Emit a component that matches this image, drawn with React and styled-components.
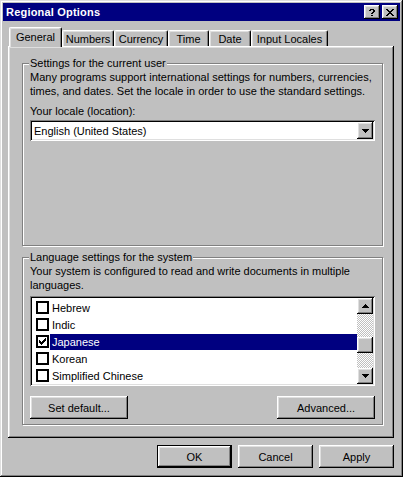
import React from "react";
import styled, { createGlobalStyle } from "styled-components";

const GlobalStyle = createGlobalStyle`
  body {
    margin: 0;
    background: #c0c0c0;
    font-family: "Liberation Sans", Arial, sans-serif;
    font-size: 11px;
    color: #000;
  }
`;

const raised = `
  box-shadow: inset -1px -1px #000, inset 1px 1px #fff,
    inset -2px -2px #808080, inset 2px 2px #dfdfdf;
`;

const sunken = `
  box-shadow: inset 1px 1px #808080, inset -1px -1px #fff,
    inset 2px 2px #000, inset -2px -2px #dfdfdf;
`;

const Window = styled.div`
  width: 403px;
  height: 477px;
  box-sizing: border-box;
  padding: 3px;
  background: #c0c0c0;
  box-shadow: inset -1px -1px #000, inset 1px 1px #dfdfdf,
    inset -2px -2px #808080, inset 2px 2px #fff;
  display: flex;
  flex-direction: column;
`;

const TitleBar = styled.div`
  height: 18px;
  background: #000080;
  color: #fff;
  display: flex;
  align-items: center;
  justify-content: space-between;
  padding: 0 2px 0 3px;
`;

const TitleText = styled.span`
  font-weight: bold;
  font-size: 11px;
  letter-spacing: 0.2px;
`;

const TitleButtons = styled.div`
  display: flex;
  gap: 2px;
`;

const TitleButton = styled.div`
  width: 16px;
  height: 14px;
  background: #c0c0c0;
  display: flex;
  align-items: center;
  justify-content: center;
  ${raised}
`;

const Body = styled.div`
  flex: 1;
  display: flex;
  flex-direction: column;
  padding: 6px 6px 6px 5px;
`;

const TabRow = styled.div`
  display: flex;
  align-items: flex-end;
  height: 19px;
  padding-left: 1px;
  position: relative;
  z-index: 1;
`;

const Tab = styled.div`
  width: ${(p) => p.$w}px;
  height: ${(p) => (p.$active ? 20 : 16)}px;
  margin-bottom: ${(p) => (p.$active ? -1 : 0)}px;
  box-sizing: border-box;
  background: #c0c0c0;
  border-top: 1px solid #fff;
  border-left: 1px solid #fff;
  border-right: 1px solid #000;
  border-radius: 2px 2px 0 0;
  box-shadow: inset -1px 0 #808080, inset 1px 1px #dfdfdf;
  display: flex;
  align-items: ${(p) => (p.$active ? "flex-start" : "center")};
  padding-top: ${(p) => (p.$active ? 3 : 0)}px;
  justify-content: center;
`;

const Panel = styled.div`
  flex: 1;
  display: flex;
  flex-direction: column;
  gap: 5px;
  padding: 11px 11px 13px 14px;
  ${raised}
`;

const Group = styled.fieldset`
  margin: 0;
  padding: 0 7px ${(p) => p.$pb || 0}px 7px;
  border: 1px solid #808080;
  box-shadow: inset 1px 1px #fff, 1px 1px #fff;
  flex: ${(p) => (p.$grow ? 1 : "none")};
  min-width: 0;
  display: flex;
  flex-direction: column;
`;

const Legend = styled.legend`
  padding: 0 1px;
  margin-left: -1px;
  line-height: 13px;
  background: #c0c0c0;
`;

const Para = styled.div`
  line-height: 14px;
  margin-top: ${(p) => p.$mt || 0}px;
`;

const Combo = styled.div`
  margin-top: 2px;
  height: 21px;
  box-sizing: border-box;
  background: #fff;
  padding: 2px;
  display: flex;
  align-items: center;
  ${sunken}
`;

const ComboText = styled.span`
  flex: 1;
  padding-left: 2px;
`;

const ArrowButton = styled.div`
  width: 16px;
  height: ${(p) => p.$h || 16}px;
  flex: none;
  background: #c0c0c0;
  display: flex;
  align-items: center;
  justify-content: center;
  ${raised}
`;

const ListBox = styled.div`
  margin-top: 4px;
  height: 90px;
  box-sizing: border-box;
  padding: 2px;
  background: #fff;
  display: flex;
  ${sunken}
`;

const Items = styled.div`
  flex: 1;
  display: flex;
  flex-direction: column;
  padding-top: 1px;
`;

const Item = styled.div`
  height: 17px;
  display: flex;
  align-items: center;
  padding-left: 4px;
`;

const Check = styled.div`
  width: 13px;
  height: 13px;
  box-sizing: border-box;
  border: 2px solid #000;
  background: #fff;
  display: flex;
  align-items: center;
  justify-content: center;
  flex: none;
`;

const ItemLabel = styled.span`
  flex: 1;
  height: 16px;
  line-height: 16px;
  margin-left: 1px;
  padding-left: 2px;
  background: ${(p) => (p.$sel ? "#000080" : "transparent")};
  color: ${(p) => (p.$sel ? "#fff" : "#000")};
`;

const ScrollBar = styled.div`
  width: 16px;
  flex: none;
  display: flex;
  flex-direction: column;
`;

const Track = styled.div`
  flex: 1;
  background-image: conic-gradient(#fff 25%, #c0c0c0 0 50%, #fff 0 75%, #c0c0c0 0);
  background-size: 2px 2px;
  display: flex;
  flex-direction: column;
  padding-top: 23px;
`;

const Thumb = styled.div`
  height: 16px;
  background: #c0c0c0;
  ${raised}
`;

const ButtonRow = styled.div`
  display: flex;
  justify-content: ${(p) => p.$justify || "space-between"};
  gap: 6px;
  margin-top: ${(p) => p.$mt || 0}px;
`;

const Button = styled.div`
  width: ${(p) => p.$w || 75}px;
  height: 23px;
  box-sizing: border-box;
  background: #c0c0c0;
  display: flex;
  align-items: center;
  justify-content: center;
  ${(p) =>
    p.$default
      ? `border: 1px solid #000;
         box-shadow: inset -1px -1px #000, inset 1px 1px #fff,
           inset -2px -2px #808080, inset 2px 2px #dfdfdf;`
      : raised}
`;

const Pixels = ({ rows }) => (
  <svg
    width={rows[0].length}
    height={rows.length}
    shapeRendering="crispEdges"
    style={{ display: "block" }}
  >
    {rows.map((r, y) =>
      r.split("").map((c, x) =>
        c === "X" ? <rect key={x + "-" + y} x={x} y={y} width="1" height="1" fill="#000" /> : null
      )
    )}
  </svg>
);

const CLOSE = ["XX....XX", ".XX..XX.", "..XXXX..", "...XX...", "..XXXX..", ".XX..XX.", "XX....XX"];
const HELP = [".XXXX.", "XX..XX", "....XX", "...XX.", "..XX..", "......", "..XX.."];
const DOWN = ["XXXXXXX", ".XXXXX.", "..XXX..", "...X..."];
const UP = ["...X...", "..XXX..", ".XXXXX.", "XXXXXXX"];
const TICK = ["......X", ".....XX", "X...XXX", "XX.XXX.", "XXXXX..", ".XXX...", "..X...."];

const tabs = [
  ["General", 53],
  ["Numbers", 52],
  ["Currency", 54],
  ["Time", 41],
  ["Date", 42],
  ["Input Locales", 77],
];

const langs = [
  ["Hebrew", false],
  ["Indic", false],
  ["Japanese", true],
  ["Korean", false],
  ["Simplified Chinese", false],
];

export default function App() {
  return (
    <>
      <GlobalStyle />
      <Window>
        <TitleBar>
          <TitleText>Regional Options</TitleText>
          <TitleButtons>
            <TitleButton>
              <Pixels rows={HELP} />
            </TitleButton>
            <TitleButton>
              <Pixels rows={CLOSE} />
            </TitleButton>
          </TitleButtons>
        </TitleBar>
        <Body>
          <TabRow>
            {tabs.map(([name, w], i) => (
              <Tab key={name} $w={w} $active={i === 0}>
                {name}
              </Tab>
            ))}
          </TabRow>
          <Panel>
            <Group $grow>
              <Legend>Settings for the current user</Legend>
              <Para>
                Many programs support international settings for numbers, currencies,
                times, and dates. Set the locale in order to use the standard settings.
              </Para>
              <Para $mt={6}>Your locale (location):</Para>
              <Combo>
                <ComboText>English (United States)</ComboText>
                <ArrowButton $h={17}>
                  <Pixels rows={DOWN} />
                </ArrowButton>
              </Combo>
            </Group>
            <Group $pb={5}>
              <Legend>Language settings for the system</Legend>
              <Para>
                Your system is configured to read and write documents in multiple
                languages.
              </Para>
              <ListBox>
                <Items>
                  {langs.map(([name, sel]) => (
                    <Item key={name}>
                      <Check>{sel && <Pixels rows={TICK} />}</Check>
                      <ItemLabel $sel={sel}>{name}</ItemLabel>
                    </Item>
                  ))}
                </Items>
                <ScrollBar>
                  <ArrowButton>
                    <Pixels rows={UP} />
                  </ArrowButton>
                  <Track>
                    <Thumb />
                  </Track>
                  <ArrowButton>
                    <Pixels rows={DOWN} />
                  </ArrowButton>
                </ScrollBar>
              </ListBox>
              <ButtonRow $mt={10}>
                <Button $w={98}>Set default...</Button>
                <Button $w={98}>Advanced...</Button>
              </ButtonRow>
            </Group>
          </Panel>
          <ButtonRow $justify="flex-end" $mt={7}>
            <Button $default>OK</Button>
            <Button>Cancel</Button>
            <Button>Apply</Button>
          </ButtonRow>
        </Body>
      </Window>
    </>
  );
}
